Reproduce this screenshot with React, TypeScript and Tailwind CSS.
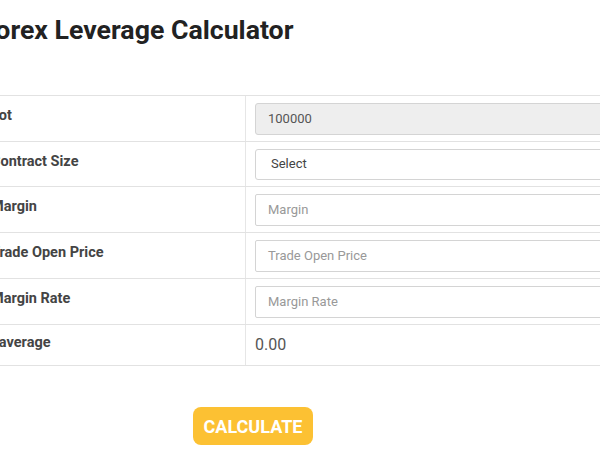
import React from "react";

const rows: { label: string; kind: "disabled" | "select" | "input" | "text"; value: string }[] = [
  { label: "Lot", kind: "disabled", value: "100000" },
  { label: "Contract Size", kind: "select", value: "Select" },
  { label: "Margin", kind: "input", value: "Margin" },
  { label: "Trade Open Price", kind: "input", value: "Trade Open Price" },
  { label: "Margin Rate", kind: "input", value: "Margin Rate" },
  { label: "Laverage", kind: "text", value: "0.00" },
];

export default function App() {
  return (
    <div className="w-[600px] h-[450px] overflow-hidden bg-white font-['Roboto',sans-serif]">
      <div className="ml-[-20px] w-[760px]">
        <h1 className="pt-[15px] pl-[1px] text-[26.7px] leading-[30px] font-bold text-[#222]">
          Forex Leverage Calculator
        </h1>
        <div className="mt-[50px] border-t border-[#e2e2e2]">
          {rows.map((r, i) => (
            <div
              key={i}
              className={`flex border-b border-[#e2e2e2] ${r.kind === "text" ? "h-[41px]" : i === 1 ? "h-[45px]" : "h-[46px]"}`}
            >
              <div className="w-[266px] shrink-0 border-r border-[#e6e6e6] pl-[11px] flex items-center">
                <span className="mb-[5px] text-[14.5px] leading-5 font-bold text-[#444]">{r.label}</span>
              </div>
              <div className="flex-1 flex items-center pl-[9px] pr-[10px]">
                {r.kind === "disabled" && (
                  <div className="w-full h-[32px] rounded-[3px] border border-[#d4d4d4] bg-[#eeeeee] pl-[12px] flex items-center text-[13px] text-[#555]">
                    {r.value}
                  </div>
                )}
                {r.kind === "select" && (
                  <div className="w-full h-[31px] rounded-[3px] border border-[#d4d4d4] bg-white pl-[15px] flex items-center text-[13px] text-[#444]">
                    {r.value}
                  </div>
                )}
                {r.kind === "input" && (
                  <div className="w-full h-[32px] rounded-[2px] border border-[#d4d4d4] bg-white pl-[12px] flex items-center text-[13px] text-[#999]">
                    {r.value}
                  </div>
                )}
                {r.kind === "text" && (
                  <span className="text-[16px] text-[#555]">{r.value}</span>
                )}
              </div>
            </div>
          ))}
        </div>
        <button className="mt-[41px] ml-[213px] w-[120px] h-[38px] rounded-[8px] bg-[#fcc133] text-white text-[18px] font-bold">
          CALCULATE
        </button>
      </div>
    </div>
  );
}
